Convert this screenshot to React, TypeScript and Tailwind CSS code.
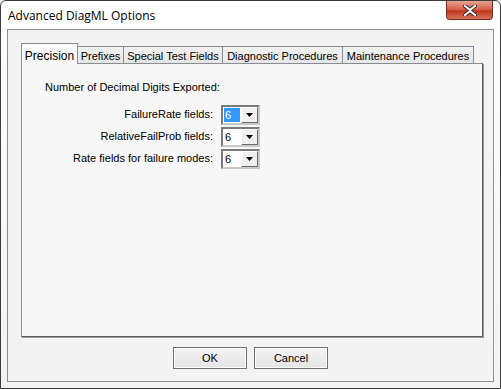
const font = { fontFamily: '"Liberation Sans", Arial, sans-serif' };

const TABS = [
  { label: 'Precision', w: 57 },
  { label: 'Prefixes', w: 46 },
  { label: 'Special Test Fields', w: 99 },
  { label: 'Diagnostic Procedures', w: 120 },
  { label: 'Maintenance Procedures', w: 131 },
];

const FIELDS = ['FailureRate fields:', 'RelativeFailProb fields:', 'Rate fields for failure modes:'];

function Combo({ selected }: { selected?: boolean }) {
  return (
    <div className="flex h-[20px] w-[39px] border-2 border-t-[#7a7a7a] border-l-[#7a7a7a] border-b-[#c8c8c8] border-r-[#c8c8c8] bg-white">
      <div className="flex flex-1 items-center pl-[1px]">
        <span className={`px-[1px] text-[11px] leading-[14px] ${selected ? 'bg-[#3399ff] text-white w-[16px]' : 'text-black'}`}>6</span>
      </div>
      <div className="flex w-[17px] items-center justify-center border border-t-white border-l-white border-b-[#6b6b6b] border-r-[#6b6b6b] bg-[#f0f0f0]">
        <svg width="7" height="4" viewBox="0 0 7 4"><path d="M0 0h7L3.5 4z" fill="#000" /></svg>
      </div>
    </div>
  );
}

function Button({ label }: { label: string }) {
  return (
    <div className="flex h-[22px] w-[74px] items-center justify-center border border-[#707070] bg-[linear-gradient(#f4f4f4,#e4e4e4)] text-[11px] text-black shadow-[inset_0_0_0_1px_#fcfcfc]">
      {label}
    </div>
  );
}

export default function App() {
  return (
    <div className="h-[389px] w-[501px] bg-white" style={font}>
      <div className="flex h-full w-full flex-col rounded-t-[6px] border border-[#3c3c3c] bg-[linear-gradient(#ffffff,#f3f3f3)]">
        {/* Title bar */}
        <div className="flex h-[28px] items-start justify-between pl-[7px] pr-[7px]">
          <span className="mt-[6px] text-[12px] text-black" style={{ fontFamily: '"Open Sans", "Liberation Sans", sans-serif' }}>
            Advanced DiagML Options
          </span>
          <div className="flex h-[19px] w-[47px] items-center justify-center rounded-b-[4px] border border-t-0 border-[#7a2a20] bg-[linear-gradient(#e8a493,#d7634c_45%,#c0381e_55%,#d5725a)]">
            <svg width="14" height="11" viewBox="0 0 14 11">
              <path d="M2 1l5 4 5-4M2 10l5-4 5 4" stroke="#3a2a2a" strokeWidth="4" fill="none" strokeLinecap="square" />
              <path d="M2 1l5 4 5-4M2 10l5-4 5 4" stroke="#fff" strokeWidth="2" fill="none" strokeLinecap="square" />
            </svg>
          </div>
        </div>

        {/* Client area */}
        <div className="mx-[6px] mb-[6px] flex flex-1 flex-col border border-[#8e8e8e] bg-[#f3f3f3] px-[13px] pt-[12px] text-[11px] text-black">
          {/* Tabs */}
          <div className="flex h-[21px] items-end">
            {TABS.map((t, i) => (
              <div
                key={t.label}
                style={{ width: t.w }}
                className={
                  i === 0
                    ? 'relative z-10 -mb-[1px] flex h-[21px] items-start justify-center border border-b-0 border-[#898c95] bg-[#f9f9f9] pt-[3px] text-[12px]'
                    : 'flex h-[17px] items-start justify-center border border-b-0 border-l-0 border-[#898c95] bg-[linear-gradient(#f2f2f2,#e6e6e6)] pt-[1px]'
                }
              >
                {t.label}
              </div>
            ))}
          </div>

          {/* Panel */}
          <div className="h-[274px] w-[462px] border border-[#898c95] border-b-[#5e5e5e] border-r-[#5e5e5e] bg-[#f7f7f7] shadow-[1px_1px_0_#9a9a9a]">
            <div className="pl-[23px] pt-[15px]">Number of Decimal Digits Exported:</div>
            <div className="mt-[9px] flex flex-col gap-[2px]">
              {FIELDS.map((f, i) => (
                <div key={f} className="flex items-center">
                  <span className="w-[199px] pr-[8px] text-right">{f}</span>
                  <Combo selected={i === 0} />
                </div>
              ))}
            </div>
          </div>

          {/* Buttons */}
          <div className="mt-[10px] flex justify-center gap-[7px]">
            <Button label="OK" />
            <Button label="Cancel" />
          </div>
        </div>
      </div>
    </div>
  );
}
